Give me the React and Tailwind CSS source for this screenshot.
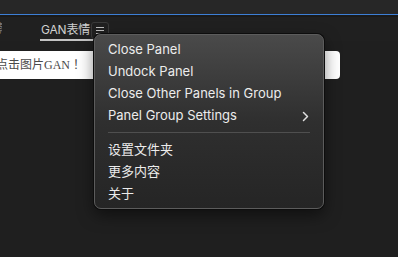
export default function App() {
  const items = ['Close Panel', 'Undock Panel', 'Close Other Panels in Group']
  const cn = ['设置文件夹', '更多内容', '关于']

  return (
    <div className="relative w-[398px] h-[257px] overflow-hidden bg-[#1f1f1f] font-['Inter','Noto_Sans_CJK_SC',sans-serif]">
      {/* title bar */}
      <div className="h-[14px] bg-[#272727]" />
      <div className="h-px bg-[#3d7fd6]" />
      <div className="h-[2px] bg-[#1a1a1a]" />

      {/* tab row */}
      <div className="flex items-center h-[24px] bg-[#202020]">
        <span className="-ml-[6px] w-[8px] overflow-hidden text-[12px] text-[#7a7a7a]">素</span>
        <div className="ml-[39px] flex flex-col h-full justify-center relative">
          <span className="text-[12px] text-[#cfcfcf] leading-none pt-[2px] tracking-[-0.2px]">GAN表情</span>
          <div className="absolute left-[-1px] right-[-4px] bottom-[0px] h-[2px] bg-[#c4c4c4]" />
        </div>
        <div className="ml-[1px] mt-[2px] w-[18px] h-[17px] rounded-[3px] border border-[#3a3a3a] flex flex-col items-center justify-center gap-[2px]">
          <div className="w-[8px] h-px bg-[#bdbdbd]" />
          <div className="w-[8px] h-px bg-[#bdbdbd]" />
          <div className="w-[8px] h-px bg-[#bdbdbd]" />
        </div>
      </div>

      {/* panel body */}
      <div className="pt-[10px]">
        <div className="w-[340px] h-[28px] bg-white rounded-r-[4px] flex items-center overflow-hidden">
          <span className="-ml-[4px] text-[12px] text-[#4a4a4a] font-['Liberation_Serif','Noto_Sans_CJK_SC',serif]">点击图片GAN<span className="ml-[3px]">！</span></span>
        </div>
      </div>

      {/* context menu */}
      <div className="absolute left-[94px] top-[34px] w-[230px] h-[175px] rounded-[7px] border border-[#5c5c5c] shadow-[0_0_0_1px_#0d0d0d,0_6px_16px_rgba(0,0,0,0.5)] bg-gradient-to-b from-[#4a4a4a] via-[#2f2f2f] to-[#252525] py-[4px] text-[13px] text-[#ececec]">
        {items.map(t => (
          <div key={t} className="h-[22px] flex items-center pl-[13px]">{t}</div>
        ))}
        <div className="h-[22px] flex items-center pl-[13px] pr-[14px] justify-between">
          <span>Panel Group Settings</span>
          <svg width="7" height="11" viewBox="0 0 7 11" fill="none">
            <path d="M1.5 1.5L5.5 5.5L1.5 9.5" stroke="#e0e0e0" strokeWidth="1.5" strokeLinecap="round" strokeLinejoin="round" />
          </svg>
        </div>
        <div className="mx-[13px] mt-[5px] mb-[6px] h-px bg-[#4f4f4f]" />
        {cn.map(t => (
          <div key={t} className="h-[22px] flex items-center pl-[13px]">{t}</div>
        ))}
      </div>
    </div>
  )
}
